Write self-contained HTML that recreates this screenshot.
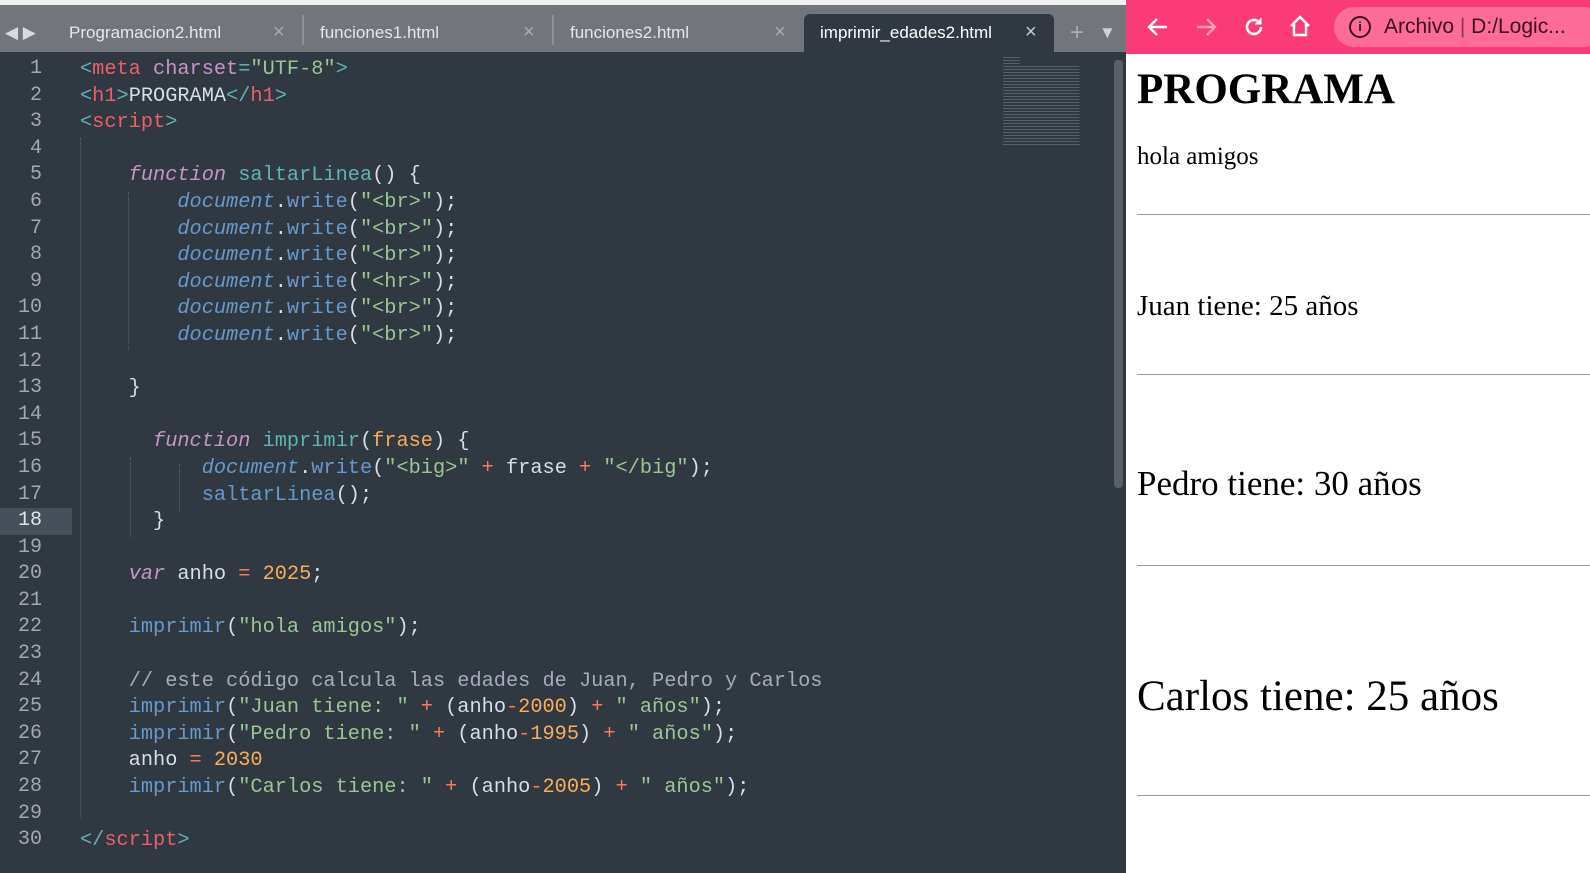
<!DOCTYPE html>
<html><head><meta charset="UTF-8"><style>
*{margin:0;padding:0;box-sizing:border-box}
body{width:1590px;height:873px;overflow:hidden;background:#303841;position:relative;font-family:"Liberation Sans",sans-serif}
#tabs{position:absolute;left:0;top:0;width:1126px;height:52px;background:#72767c;border-top:5px solid #f0f0f0}
.tab{position:absolute;top:8px;height:39px;color:#e6e6e6;font-size:17px;line-height:39px}
.x{position:absolute;top:8px;color:#a8abb0;font-size:20px;line-height:39px}
.sep{position:absolute;top:10px;width:2px;height:30px;background:#8d9096}
#atab{position:absolute;left:804px;top:9px;width:250px;height:43px;background:#303841;border-radius:6px 6px 0 0}
#gut{position:absolute;left:0;top:56px;width:72px}
.ln{height:26.6px;line-height:26.6px;text-align:right;padding-right:30px;color:#a3a8b0;font-family:"Liberation Mono",monospace;font-size:20px}
.ln.cur{background:#46505a;color:#e0e4ea}
#code{position:absolute;left:80px;top:57px;font-family:"Liberation Mono",monospace;font-size:20.3px;color:#d8dee9}
#code div{height:26.6px;line-height:26.6px;white-space:pre}
.t{color:#5fb4b4}.n{color:#ec5f66}.a{color:#c695c6}.s{color:#99c794}.k{color:#c695c6;font-style:italic}.f{color:#5fb4b4}.d{color:#6699cc;font-style:italic}.b{color:#6699cc}.o{color:#f9ae58}.p{color:#f97b58}.c{color:#a6acb9}
#sb{position:absolute;left:1114px;top:60px;width:9px;height:428px;background:#5a6068;border-radius:4px}
#br{position:absolute;left:1126px;top:0;width:464px;height:873px;background:#fff}
#bar{position:absolute;left:0;top:0;width:464px;height:54px;background:#fb3b78}
#url{position:absolute;left:208px;top:7px;width:270px;height:40px;background:#fd6c99;border-radius:20px;color:#3a1020;font-size:21px;line-height:40px;padding-left:50px;white-space:nowrap}
.pg{position:absolute;left:11px;font-family:"Liberation Serif",serif;color:#000;white-space:nowrap}
.hr{position:absolute;left:11px;width:460px;height:1px;background:#9a9a9a}
</style></head><body>
<div id="tabs">
<div style="position:absolute;left:5px;top:8px;color:#d9dadc;font-size:17px;line-height:39px">◀ ▶</div>
<div class="tab" style="left:69px">Programacion2.html</div><div class="x" style="left:273px">×</div>
<div class="sep" style="left:302px"></div>
<div class="tab" style="left:320px">funciones1.html</div><div class="x" style="left:523px">×</div>
<div class="sep" style="left:552px"></div>
<div class="tab" style="left:570px">funciones2.html</div><div class="x" style="left:774px">×</div>
<div id="atab"></div>
<div class="tab" style="left:820px;color:#fff">imprimir_edades2.html</div><div class="x" style="left:1025px;color:#c8cacd">×</div>
<div style="position:absolute;left:1070px;top:8px;color:#a8abb0;font-size:24px;line-height:39px">+</div>
<div style="position:absolute;left:1099px;top:8px;color:#d0d2d5;font-size:17px;line-height:39px">▼</div>
</div>
<div id="gut">
<div class="ln">1</div><div class="ln">2</div><div class="ln">3</div><div class="ln">4</div><div class="ln">5</div><div class="ln">6</div><div class="ln">7</div><div class="ln">8</div><div class="ln">9</div><div class="ln">10</div><div class="ln">11</div><div class="ln">12</div><div class="ln">13</div><div class="ln">14</div><div class="ln">15</div><div class="ln">16</div><div class="ln">17</div><div class="ln cur">18</div><div class="ln">19</div><div class="ln">20</div><div class="ln">21</div><div class="ln">22</div><div class="ln">23</div><div class="ln">24</div><div class="ln">25</div><div class="ln">26</div><div class="ln">27</div><div class="ln">28</div><div class="ln">29</div><div class="ln">30</div>
</div>
<div style="position:absolute;left:80px;top:138px;width:0;height:680px;border-left:1px dotted #566068"></div>
<div style="position:absolute;left:128px;top:192px;width:0;height:158px;border-left:1px dotted #566068"></div>
<div style="position:absolute;left:130px;top:458px;width:0;height:80px;border-left:1px dotted #566068"></div>
<div style="position:absolute;left:179px;top:464px;width:0;height:48px;border-left:1px dotted #566068"></div>
<div id="code"><div><span class="t">&lt;</span><span class="n">meta</span> <span class="a">charset</span><span class="t">=</span><span class="s">"UTF-8"</span><span class="t">&gt;</span></div><div><span class="t">&lt;</span><span class="n">h1</span><span class="t">&gt;</span>PROGRAMA<span class="t">&lt;/</span><span class="n">h1</span><span class="t">&gt;</span></div><div><span class="t">&lt;</span><span class="n">script</span><span class="t">&gt;</span></div><div> </div><div>    <span class="k">function</span> <span class="f">saltarLinea</span>() {</div><div>        <span class="d">document</span>.<span class="b">write</span>(<span class="s">"&lt;br&gt;"</span>);</div><div>        <span class="d">document</span>.<span class="b">write</span>(<span class="s">"&lt;br&gt;"</span>);</div><div>        <span class="d">document</span>.<span class="b">write</span>(<span class="s">"&lt;br&gt;"</span>);</div><div>        <span class="d">document</span>.<span class="b">write</span>(<span class="s">"&lt;hr&gt;"</span>);</div><div>        <span class="d">document</span>.<span class="b">write</span>(<span class="s">"&lt;br&gt;"</span>);</div><div>        <span class="d">document</span>.<span class="b">write</span>(<span class="s">"&lt;br&gt;"</span>);</div><div> </div><div>    }</div><div> </div><div>      <span class="k">function</span> <span class="f">imprimir</span>(<span class="o">frase</span>) {</div><div>          <span class="d">document</span>.<span class="b">write</span>(<span class="s">"&lt;big&gt;"</span> <span class="p">+</span> frase <span class="p">+</span> <span class="s">"&lt;/big"</span>);</div><div>          <span class="b">saltarLinea</span>();</div><div>      }</div><div> </div><div>    <span class="k">var</span> anho <span class="p">=</span> <span class="o">2025</span>;</div><div> </div><div>    <span class="b">imprimir</span>(<span class="s">"hola amigos"</span>);</div><div> </div><div>    <span class="c">// este código calcula las edades de Juan, Pedro y Carlos</span></div><div>    <span class="b">imprimir</span>(<span class="s">"Juan tiene: "</span> <span class="p">+</span> (anho<span class="p">-</span><span class="o">2000</span>) <span class="p">+</span> <span class="s">" años"</span>);</div><div>    <span class="b">imprimir</span>(<span class="s">"Pedro tiene: "</span> <span class="p">+</span> (anho<span class="p">-</span><span class="o">1995</span>) <span class="p">+</span> <span class="s">" años"</span>);</div><div>    anho <span class="p">=</span> <span class="o">2030</span></div><div>    <span class="b">imprimir</span>(<span class="s">"Carlos tiene: "</span> <span class="p">+</span> (anho<span class="p">-</span><span class="o">2005</span>) <span class="p">+</span> <span class="s">" años"</span>);</div><div> </div><div><span class="t">&lt;/</span><span class="n">script</span><span class="t">&gt;</span></div></div>
<div style="position:absolute;left:1003px;top:55px;width:85px;height:90px;opacity:.5;background:repeating-linear-gradient(#303841 0 2px,#7a8a90 2px 3px);clip-path:polygon(0 0,20% 0,20% 10%,90% 10%,90% 100%,0 100%)"></div>
<div id="sb"></div>
<div id="br">
<div id="bar">
<svg style="position:absolute;left:20px;top:15px" width="24" height="24" viewBox="0 0 24 24" fill="none" stroke="#fff" stroke-width="2.4"><path d="M21 12H4M11 4l-8 8 8 8"/></svg>
<svg style="position:absolute;left:68px;top:15px" width="24" height="24" viewBox="0 0 24 24" fill="none" stroke="#fda0bd" stroke-width="2.4"><path d="M3 12h17M13 4l8 8-8 8"/></svg>
<svg style="position:absolute;left:116px;top:15px" width="24" height="24" viewBox="0 0 24 24" fill="none" stroke="#fff" stroke-width="2.6"><path d="M19 12a7 7 0 1 1-2.2-5.1"/><path d="M19 3v6h-6" fill="#fff" stroke-width="1"/></svg>
<svg style="position:absolute;left:162px;top:14px" width="24" height="24" viewBox="0 0 24 24" fill="none" stroke="#fff" stroke-width="2.4"><path d="M3 12L12 3l9 9M6 10v11h12V10"/></svg>
<div id="url"><span style="position:absolute;left:15px;top:0;width:22px;height:22px;margin-top:9px;border:2px solid #3a1020;border-radius:50%;font-size:13px;line-height:18px;text-align:center;font-weight:bold">i</span>Archivo <span style="color:#3a1020;opacity:.6">|</span> D:/Logic...</div>
</div>
<div class="pg" style="top:65px;font-size:43px;font-weight:bold">PROGRAMA</div>
<div class="pg" style="top:143px;font-size:25px">hola amigos</div>
<div class="hr" style="top:214px"></div>
<div class="pg" style="top:290px;font-size:29px">Juan tiene: 25 años</div>
<div class="hr" style="top:374px"></div>
<div class="pg" style="top:464px;font-size:35px">Pedro tiene: 30 años</div>
<div class="hr" style="top:565px"></div>
<div class="pg" style="top:672px;font-size:43px">Carlos tiene: 25 años</div>
<div class="hr" style="top:795px"></div>
</div>
</body></html>
